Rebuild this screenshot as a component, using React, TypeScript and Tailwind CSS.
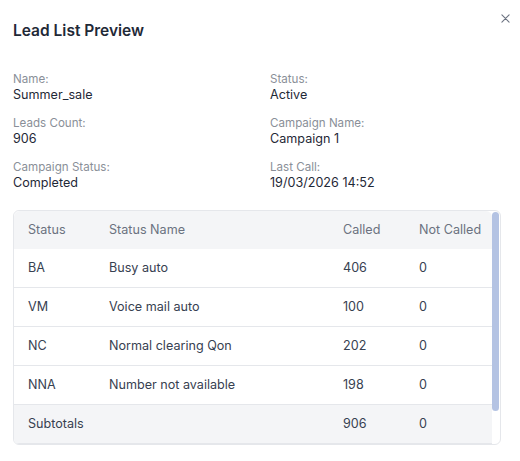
const info = [
  { label: 'Name:', value: 'Summer_sale' },
  { label: 'Status:', value: 'Active' },
  { label: 'Leads Count:', value: '906' },
  { label: 'Campaign Name:', value: 'Campaign 1' },
  { label: 'Campaign Status:', value: 'Completed' },
  { label: 'Last Call:', value: '19/03/2026 14:52' },
];

const rows = [
  { code: 'BA', name: 'Busy auto', called: 406, notCalled: 0 },
  { code: 'VM', name: 'Voice mail auto', called: 100, notCalled: 0 },
  { code: 'NC', name: 'Normal clearing Qon', called: 202, notCalled: 0 },
  { code: 'NNA', name: 'Number not available', called: 198, notCalled: 0 },
];

const cols = 'grid grid-cols-[81px_234px_76px_1fr] items-center pl-[14px]';

export default function App() {
  return (
    <div className="relative w-[520px] h-[461px] bg-white px-[13px] pt-[21px] font-['Inter',sans-serif] overflow-hidden">
      {/* close */}
      <button className="absolute right-[10px] top-[14px] w-[9px] h-[9px] text-[#6b7280]">
        <svg viewBox="0 0 10 10" width="9" height="9" stroke="currentColor" strokeWidth="1.2" strokeLinecap="round">
          <path d="M1 1L9 9M9 1L1 9" />
        </svg>
      </button>

      <h2 className="text-[15.5px] leading-[20px] font-semibold text-[#1f2937]">Lead List Preview</h2>

      {/* info */}
      <div className="mt-[30px] grid grid-cols-[257px_1fr] gap-y-[11px]">
        {info.map((item) => (
          <div key={item.label}>
            <p className="text-[11.6px] leading-[16px] text-[#8a8f98]">{item.label}</p>
            <p className="-mt-[1px] text-[12.6px] leading-[18px] text-[#1f2937]">{item.value}</p>
          </div>
        ))}
      </div>

      {/* table */}
      <div className="mt-[18px] w-[488px] h-[235px] border border-[#e5e7eb] rounded-[6px] overflow-hidden flex">
        <div className="flex-1 overflow-hidden">
          <div className={`${cols} h-[38px] bg-[#f4f5f7] rounded-t-[6px] text-[12.6px] text-[#6b7280]`}>
            <span>Status</span>
            <span>Status Name</span>
            <span>Called</span>
            <span>Not Called</span>
          </div>
          {rows.map((r) => (
            <div key={r.code} className={`${cols} h-[39px] border-b border-[#e5e7eb] text-[12.6px] text-[#374151]`}>
              <span>{r.code}</span>
              <span>{r.name}</span>
              <span>{r.called}</span>
              <span>{r.notCalled}</span>
            </div>
          ))}
          <div className={`${cols} h-[39px] bg-[#f4f5f7] border-b border-[#e5e7eb] text-[12.6px] text-[#374151]`}>
            <span>Subtotals</span>
            <span></span>
            <span>906</span>
            <span>0</span>
          </div>
        </div>
        {/* scrollbar */}
        <div className="w-[8px] pt-[1px] pr-[1px]">
          <div className="h-[199px] w-[7px] rounded-full bg-[#b4c3e3]" />
        </div>
      </div>
    </div>
  );
}
